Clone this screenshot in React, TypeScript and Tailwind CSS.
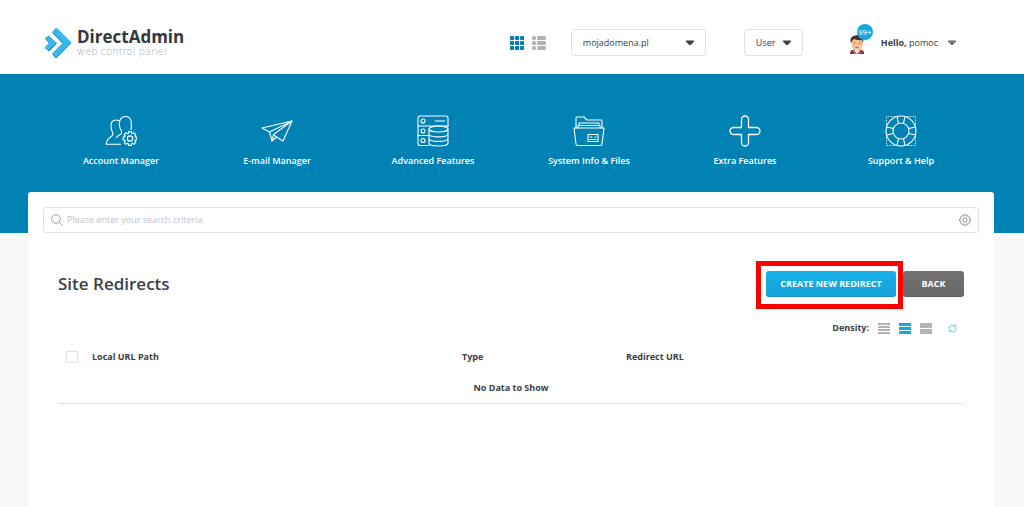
import React from "react";

const iconProps = {
    width: 32,
    height: 32,
    viewBox: "0 0 32 32",
    fill: "none",
    stroke: "currentColor",
    strokeWidth: 1.1,
    strokeLinecap: "round" as const,
    strokeLinejoin: "round" as const,
};

function GearPath({ cx, cy, r, teeth = 8 }: { cx: number; cy: number; r: number; teeth?: number }) {
    const points: string[] = [];
    for (let i = 0; i < teeth; i++) {
        const a = (i * 2 * Math.PI) / teeth;
        [[-0.29, 0.78], [-0.2, 1], [0.2, 1], [0.29, 0.78]].forEach(([da, k]) => {
            points.push(`${(cx + Math.cos(a + da) * r * k).toFixed(2)},${(cy + Math.sin(a + da) * r * k).toFixed(2)}`);
        });
    }
    return (
        <>
            <polygon points={points.join(" ")} />
            <circle cx={cx} cy={cy} r={r * 0.38} />
        </>
    );
}

function UsersIcon() {
    return (
        <svg {...iconProps}>
            <path d="M26 14.500c.6-1.400.2-2 .3-4.500C26.800 4 24.500 1.500 20.500 1.500S14 4.500 14.300 9.500c.1 3 .5 4 2.200 6.500.7 1.500-.2 3.200-2 4-1.400.8-2.400 1.600-3 2.500" />
            <path d="M13.800 5.500C9.500 4 5.800 6 6 11c0 4 .5 4.500 1.700 6.500.8 2-.4 3.500-2.700 5-2.500 1.500-3.500 3-3.800 6.800H15.500" />
            <GearPath cx={25} cy={23.5} r={7} />
        </svg>
    );
}

function PlaneIcon() {
    return (
        <svg {...iconProps}>
            <path d="M1 13 31 6 22 26l-6.500-4L11 26 8.500 17z" />
            <path d="M8.500 17 31 6 12.500 19.500 11 26M12.500 19.500l3 2.500" />
        </svg>
    );
}

function ServerIcon() {
    return (
        <svg {...iconProps}>
            <path d="M12 30.500H3a2 2 0 0 1-2-2V3a2 2 0 0 1 2-2h26a2 2 0 0 1 2 2v8.500" />
            <path d="M1 11h30M1 20.500h11" />
            <circle cx="6" cy="6" r="2" />
            <circle cx="6" cy="16" r="2" />
            <circle cx="6" cy="25.500" r="2" />
            <path strokeWidth=".6" d="m18 5 1 2 1-2 1 2 1-2 1 2 1-2 1 2 1-2 1 2 1-2" />
            <ellipse cx="21.500" cy="14" rx="9.500" ry="3" />
            <path d="M12 14v14c0 4 19 4 19 0V14M12 19c0 3.800 19 3.800 19 0M12 23.500c0 3.800 19 3.800 19 0" />
        </svg>
    );
}

function FolderIcon() {
    return (
        <svg {...iconProps}>
            <path d="M1 13h30l-2 16a1.500 1.500 0 0 1-1.500 1.500h-23A1.500 1.500 0 0 1 3 29z" />
            <path d="M3 13V3a1 1 0 0 1 1-1h7l3 3h14a1 1 0 0 1 1 1v7" />
            <path d="M5 13v-2.500h22V13M6 10.500V8h20v2.500" />
            <path d="M15 19.500h10v7H15zM17 22h2M17 24.500h6M22 22h1" />
        </svg>
    );
}

function PlusIcon() {
    return (
        <svg {...iconProps} strokeWidth={1.3}>
            <path d="M12.500 12.500V4.500a3.500 3.500 0 0 1 7 0v8h8a3.500 3.500 0 0 1 0 7h-8v8a3.500 3.500 0 0 1-7 0v-8h-8a3.500 3.500 0 0 1 0-7z" />
        </svg>
    );
}

function SupportIcon() {
    return (
        <svg {...iconProps}>
            <circle cx="16" cy="16" r="15" />
            <circle cx="16" cy="16" r="8" />
            <path d="m12 1.500 1.500 6.800M20 1.500l-1.500 6.800M12 30.500l1.500-6.800M20 30.500l-1.500-6.800M1.500 12l6.800 1.500M1.500 20l6.800-1.500M30.500 12l-6.800 1.500M30.500 20l-6.800-1.500" />
            <path strokeWidth=".8" strokeDasharray="1 2" d="M10 1.500H1.500V10M22 1.500h8.500V10M1.500 22v8.500H10M30.500 22v8.500H22" />
        </svg>
    );
}

const navItems = [
    { label: "Account Manager", Icon: UsersIcon },
    { label: "E-mail Manager", Icon: PlaneIcon },
    { label: "Advanced Features", Icon: ServerIcon },
    { label: "System Info & Files", Icon: FolderIcon },
    { label: "Extra Features", Icon: PlusIcon },
    { label: "Support & Help", Icon: SupportIcon },
];

const densities = [
    { label: "Compact", rows: [0, 3, 6, 9], height: 2, color: "text-[#b3b3b3]" },
    { label: "Normal", rows: [0, 4, 8], height: 3, color: "text-[#14a7e0]" },
    { label: "Comfortable", rows: [0, 6], height: 5, color: "text-[#b3b3b3]" },
];

function Caret({ className = "" }: { className?: string }) {
    return (
        <svg width="10" height="6" viewBox="0 0 10 6" className={className} fill="currentColor">
            <path d="M1.500.5h7q1.200 0 .5 1L6 4.800Q5 5.600 4 4.800L1 1.500Q.3.5 1.500.5z" />
        </svg>
    );
}

function Logo() {
    return (
        <a href="#" className="flex items-center gap-[5px]">
            <svg width="28" height="32" viewBox="0 0 28 32">
                <path fill="#1b87b8" d="M8 5.500 12 1l15 15.500L12 31.500 8 27l10.500-10.500zM1 11.500 5 9l8 7.500-8 8L1 21l4-4.500z" />
                <path fill="#36b9ec" d="M12.500.5 27.500 15.500 12 30 8.500 26 19 15.500 8.500 4.500z" />
                <path fill="#36b9ec" d="M4.500 8.500 12.500 15.500 4 23.500 1 20l4.500-4.500L1 11z" />
            </svg>
            <div>
                <div className="text-[17px] leading-[18px] font-bold text-[#33383d]">DirectAdmin</div>
                <div className="font-['DejaVu_Sans'] text-[10px] leading-3 font-light text-[#a8a8a8]">web control panel</div>
            </div>
        </a>
    );
}

function Avatar() {
    return (
        <div className="relative mr-2">
            <svg width="24" height="22" viewBox="0 0 24 22">
                <path fill="#e8537a" d="M1 22c0-4 3-5 7-5s7 1 7 5z" />
                <path fill="#fff" d="M5 17.500h6L8 22z" />
                <path fill="#5a4550" d="M1 22c0-2 .8-3.500 2.500-4L5 22zM15 22c0-2-.8-3.500-2.500-4L11 22z" />
                <ellipse cx="8" cy="11.500" rx="5.800" ry="7" fill="#f5c396" />
                <path fill="#4b3028" d="M2 11C.5 6 3 4 5 4c3-2 10-1 9.500 3L14 11l-1-3C10 8.500 7 8 5 7c-1 1-2.500 2-3 4z" />
                <path stroke="#8a5a40" strokeWidth=".8" fill="none" d="M4.500 11h2M9.500 11h2M6.500 15.500h3" />
            </svg>
            <span className="absolute -top-2 left-2 flex h-4 w-4 items-center justify-center rounded-full bg-[#14a7e0] text-[8px] text-white">
                99+
            </span>
        </div>
    );
}

export default function App() {
    return (
        <div className="flex min-h-screen flex-col bg-[#f8f8f8] font-['Open_Sans','Noto_Sans',sans-serif] text-[9px] text-[#3b4045]">
            {/* Top bar */}
            <header className="flex h-[74px] items-center bg-white pt-[11px] pr-[67px] pl-11">
                <Logo />
                <div className="ml-auto flex items-center">
                    <button aria-label="Grid view" className="mr-2 text-[#0082b5]">
                        <svg width="14" height="14" viewBox="0 0 14 14" fill="currentColor">
                            {[0, 5, 10].map((y) => [0, 5, 10].map((x) => <rect key={`${x}-${y}`} x={x} y={y} width="4.200" height="4" rx="1" />))}
                        </svg>
                    </button>
                    <button aria-label="List view" className="mr-[25px] text-[#b3b3b3]">
                        <svg width="14" height="14" viewBox="0 0 14 14" fill="currentColor">
                            {[0, 5, 10].map((y) => (
                                <React.Fragment key={y}>
                                    <rect x="0" y={y} width="4" height="4" rx="1.500" />
                                    <rect x="5" y={y} width="9" height="4" rx="1.500" />
                                </React.Fragment>
                            ))}
                        </svg>
                    </button>
                    <div className="relative mr-[38px]">
                        <select aria-label="Domain" className="h-[27px] w-[135px] appearance-none rounded-[3px] border border-[#e2e2e2] bg-white px-[11px]">
                            <option>mojadomena.pl</option>
                        </select>
                        <Caret className="pointer-events-none absolute top-[11px] right-[11px]" />
                    </div>
                    <div className="relative mr-[46px]">
                        <select aria-label="Access level" className="h-[27px] w-[59px] appearance-none rounded-[3px] border border-[#e2e2e2] bg-white px-[11px]">
                            <option>User</option>
                        </select>
                        <Caret className="pointer-events-none absolute top-[11px] right-[11px]" />
                    </div>
                    <button className="flex items-center">
                        <Avatar />
                        <span><b>Hello,</b> pomoc</span>
                        <Caret className="ml-[9px] text-[#707070]" />
                    </button>
                </div>
            </header>

            {/* Main navigation */}
            <nav className="grid grid-cols-6 bg-[#0082b5] pt-[41px] pr-[45px] pb-[65px] pl-[43px] text-white">
                {navItems.map(({ label, Icon }) => (
                    <a key={label} href="#" className="flex flex-col items-center gap-[7px] font-semibold">
                        <Icon />
                        <span className="leading-[14px]">{label}</span>
                    </a>
                ))}
            </nav>

            {/* Page card */}
            <main className="-mt-[41px] mr-[30px] ml-7 flex-1 rounded-t-[3px] bg-white p-[15px]">
                <div className="flex h-[26px] items-center rounded-[3px] border border-[#e2e2e2] px-[7px]">
                    <svg width="12" height="12" viewBox="0 0 12 12" fill="none" stroke="#a8a8a8">
                        <circle cx="5" cy="5" r="4.300" />
                        <path d="m8 8 3.500 3.500" />
                    </svg>
                    <input
                        type="text"
                        aria-label="Search"
                        placeholder="Please enter your search criteria"
                        className="ml-1 min-w-0 flex-1 outline-none placeholder:text-[#c4c4c4]"
                    />
                    <button aria-label="Search settings">
                        <svg width="12" height="12" viewBox="0 0 12 12" fill="none" stroke="#8c8c8c" strokeWidth=".9">
                            <GearPath cx={6} cy={6} r={5.5} />
                        </svg>
                    </button>
                </div>

                <div className="px-[15px] pt-[38px]">
                    <div className="flex h-[26px] items-center justify-between">
                        <h1 className="text-[17px] font-semibold">Site Redirects</h1>
                        <div className="flex gap-[7px] font-bold text-white">
                            <div className="relative">
                                <button className="block h-[26px] w-[130px] rounded-[3px] border-b border-[#1294c8] bg-linear-to-b from-[#17b0e8] to-[#14a2da]">
                                    CREATE NEW REDIRECT
                                </button>
                                <span className="pointer-events-none absolute -top-2.5 -right-[7px] -bottom-3 -left-2.5 border-5 border-[#ff0000]" />
                            </div>
                            <button className="h-[26px] w-[61px] rounded-[3px] border-b border-[#5c5c5c] bg-linear-to-b from-[#727272] to-[#686868]">BACK</button>
                        </div>
                    </div>

                    <div className="mt-[23px] flex items-center justify-end">
                        <span className="mr-[9px] leading-4 font-bold">Density:</span>
                        {densities.map((d) => (
                            <button key={d.label} aria-label={d.label} className={`mr-[9px] ${d.color}`}>
                                <svg width="12" height="11" viewBox="0 0 12 11" fill="currentColor">
                                    {d.rows.map((y) => <rect key={y} y={y} width="12" height={d.height} />)}
                                </svg>
                            </button>
                        ))}
                        <button aria-label="Refresh" className="mx-[7px] text-[#5cc0e8]">
                            <svg width="9" height="9" viewBox="0 0 9 9" fill="none" stroke="currentColor" strokeWidth=".9">
                                <path d="M1 5.500V4a3.300 3.300 0 0 1 6-1.500M8 3.500V5a3.300 3.300 0 0 1-6 1.500M7.500.5v2h-2M1.500 8.500v-2h2" />
                            </svg>
                        </button>
                    </div>

                    <table className="mt-1.5 w-full table-fixed border-b border-[#e2e2e2] text-left font-bold">
                        <thead>
                            <tr className="h-[30px]">
                                <th className="w-[34px] pl-2">
                                    <input type="checkbox" aria-label="Select all" className="block h-3 w-3 appearance-none border border-[#e2e2e2]" />
                                </th>
                                <th className="w-[370px]">Local URL Path</th>
                                <th className="w-[164px]">Type</th>
                                <th>Redirect URL</th>
                            </tr>
                        </thead>
                        <tbody>
                            <tr className="h-[31px]">
                                <td colSpan={4} className="text-center">No Data to Show</td>
                            </tr>
                        </tbody>
                    </table>
                </div>
            </main>
        </div>
    );
}
